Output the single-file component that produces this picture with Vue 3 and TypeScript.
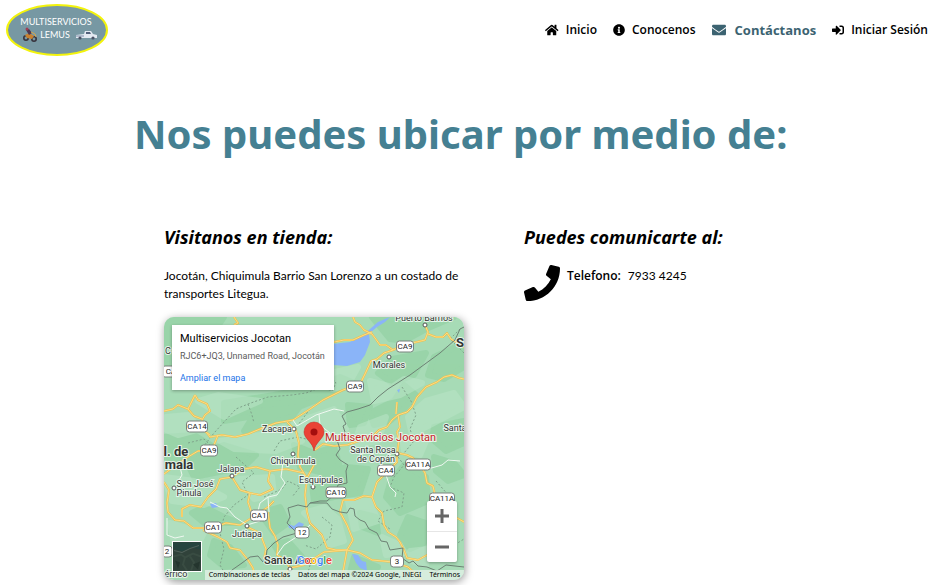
<script setup lang="ts">
import { ref } from 'vue'

interface NavItem {
  label: string
  href: string
  box: string
  icon: string
  active?: boolean
}

interface MapLabel {
  text: string
  x: number
  y: number
  size?: 'city'
}

interface Shield {
  text: string
  x: number
  y: number
  w: number
}

const nav: NavItem[] = [
  {
    label: 'Inicio',
    href: '#inicio',
    box: '0 0 576 512',
    icon: 'M280.37 148.26L96 300.11V464a16 16 0 0 0 16 16l112.06-.29a16 16 0 0 0 15.92-16V368a16 16 0 0 1 16-16h64a16 16 0 0 1 16 16v95.64a16 16 0 0 0 16 16.05L464 480a16 16 0 0 0 16-16V300L295.67 148.26a12.19 12.19 0 0 0-15.3 0zM571.6 251.47L488 182.56V44.05a12 12 0 0 0-12-12h-56a12 12 0 0 0-12 12v72.61L318.47 43a48 48 0 0 0-61 0L4.34 251.47a12 12 0 0 0-1.6 16.9l25.5 31A12 12 0 0 0 45.15 301l235.22-193.74a12.19 12.19 0 0 1 15.3 0L530.9 301a12 12 0 0 0 16.9-1.6l25.5-31a12 12 0 0 0-1.7-16.93z',
  },
  {
    label: 'Conocenos',
    href: '#conocenos',
    box: '0 0 512 512',
    icon: 'M256 8C119.043 8 8 119.083 8 256c0 136.997 111.043 248 248 248s248-111.003 248-248C504 119.083 392.957 8 256 8zm0 110c23.196 0 42 18.804 42 42s-18.804 42-42 42-42-18.804-42-42 18.804-42 42-42zm56 254c0 6.627-5.373 12-12 12h-88c-6.627 0-12-5.373-12-12v-24c0-6.627 5.373-12 12-12h12v-64h-12c-6.627 0-12-5.373-12-12v-24c0-6.627 5.373-12 12-12h64c6.627 0 12 5.373 12 12v100h12c6.627 0 12 5.373 12 12v24z',
  },
  {
    label: 'Contáctanos',
    href: '#contactanos',
    box: '0 0 512 512',
    active: true,
    icon: 'M502.3 190.8c3.9-3.1 9.7-.2 9.7 4.7V400c0 26.5-21.5 48-48 48H48c-26.5 0-48-21.5-48-48V195.6c0-5 5.7-7.8 9.7-4.7 22.4 17.4 52.1 39.5 154.1 113.6 21.1 15.4 56.7 47.8 92.2 47.6 35.7.3 72-32.8 92.3-47.6 102-74.1 131.6-96.3 154-113.7zM256 320c23.2.4 56.6-29.2 73.4-41.4 132.7-96.3 142.8-104.7 173.4-128.7 5.8-4.5 9.2-11.5 9.2-18.9v-19c0-26.5-21.5-48-48-48H48c-26.5 0-48 21.5-48 48v19c0 7.4 3.4 14.3 9.2 18.9 30.6 23.9 40.7 32.4 173.4 128.7 16.8 12.2 50.2 41.8 73.4 41.4z',
  },
  {
    label: 'Iniciar Sesión',
    href: '#sesion',
    box: '0 0 512 512',
    icon: 'M416 448h-84c-6.6 0-12-5.4-12-12v-40c0-6.6 5.4-12 12-12h84c17.7 0 32-14.3 32-32V160c0-17.7-14.3-32-32-32h-84c-6.6 0-12-5.4-12-12V76c0-6.6 5.4-12 12-12h84c53 0 96 43 96 96v192c0 53-43 96-96 96zm-47-201L201 79c-15-15-41-4.5-41 17v96H24c-13.3 0-24 10.7-24 24v96c0 13.3 10.7 24 24 24h136v96c0 21.5 26 32 41 17l168-168c9.3-9.4 9.3-24.6 0-34z',
  },
]

const darkPatches: string[] = [
  '0,0 60,0 40,30 0,50',
  '208,0 290,0 262,12 240,24 226,22',
  '228,42 262,36 250,58 228,66 214,56',
  '270,40 300,26 300,50 280,62 264,58',
  '60,86 110,78 150,70 176,60 190,66 150,84 120,96 84,100 60,104',
  '96,88 140,84 128,100 100,108 80,114',
  '206,96 230,84 240,68 252,78 240,92 226,104 210,108',
  '184,88 206,90 200,106 186,108',
  '0,120 30,118 50,130 30,146 0,140',
  '20,140 60,128 92,138 80,150 50,156 30,160',
  '130,128 150,136 170,130 176,150 160,156 136,150',
  '148,168 182,150 204,152 196,176 170,180 150,184',
  '240,148 262,160 264,184 236,196 222,180 226,166',
  '196,196 212,200 214,216 198,210',
  '270,110 300,104 300,126 282,134 268,122',
  '40,190 60,200 76,206 40,206 28,196',
  '50,224 66,230 80,248 60,250 46,238',
  '96,196 116,190 124,206 110,216',
  '244,200 262,206 260,226 246,232 236,218',
  '190,240 214,250 200,263 184,263',
  '110,228 124,224 138,240 120,244',
  '270,140 290,146 300,158 284,164 272,154',
]

const lightPatches: string[] = [
  '54,78 96,84 60,100 34,84',
  '130,106 170,92 182,112 158,122 140,118',
  '196,110 222,100 214,124 190,128',
  '244,100 262,84 290,76 300,90 262,110 248,118',
  '2,100 24,98 36,112 14,118 0,112',
  '56,124 96,118 120,110 138,124 112,134 70,132',
  '0,160 30,164 60,180 40,188 8,184',
  '74,162 108,160 110,178 90,182',
  '6,206 40,216 34,228 10,226',
  '184,184 206,184 214,204 190,212',
  '140,196 160,190 174,202 180,224 166,228 150,206',
  '238,120 262,124 256,138 240,134',
  '206,64 228,70 240,62 258,66 236,78 210,84',
  '218,220 236,228 240,236 222,238',
  '246,234 264,232 262,248 248,244',
  '166,56 194,50 184,68 168,72',
]

const roads: string[] = [
  'M189 0L191 5L196 8L200 13L208 17L211 21L216 28L222 28L229 33L220 36L213 42L207 44L201 57L196 67L188 70L179 73L159 83L146 92L129 103L112 106L96 112L84 117L71 120L58 118L46 120L38 110',
  'M31 78L34 83L43 87L46 94L41 98L38 103L38 112L46 118',
  'M31 78L27 86L24 92L14 88L9 92L0 94M24 92L30 99L38 102M70 0L74 6L70 8',
  'M170 25L180 23L189 23L200 18L208 15',
  'M229 33L240 28L261 23L264 15L261 8M264 17L272 20L279 20L283 16L287 22L300 30',
  'M300 62L295 61L288 58L280 60L273 65L262 70L253 80L248 90L243 95L234 98L236 110L233 115L235 123L233 137',
  'M234 98L228 103L223 110L215 113L206 122L195 124L183 128L170 129L159 127L151 133M233 85L232 97',
  'M123 105L132 114L135 126L134 138L136 150L143 161',
  'M233 137L233 145L223 155L213 165L208 180L200 179L190 183L179 183L176 195L183 208L189 223L183 233L172 233L163 231L158 218L146 206L143 195L141 178L143 161L150 148',
  'M208 180L212 190L218 196L220 208L224 215L232 220L236 225L240 233L243 241L254 243L263 238L275 240',
  'M234 136L243 138L249 141L256 148L261 156L263 166L269 169L271 178L280 190L293 201L300 205',
  'M183 233L196 236L208 243L229 245L244 250L258 263M183 233L179 255L176 263M183 233L160 235L140 248L126 251',
  'M0 165L5 173L3 186L4 195L11 203L20 204L29 211L49 211L62 206L76 208L89 200L84 185L86 176L76 173L68 160',
  'M0 157L12 148L24 140L34 134L52 134M54 118L50 128L45 134',
  'M68 160L80 152L92 150L106 154L104 164L109 172L96 178L86 176M106 154L122 152L140 156',
  'M18 200L18 192L26 188L37 190L44 180L52 172L56 162L68 160',
  'M104 195L106 211L111 219L114 228L113 238L120 242L126 251L116 263',
  'M39 213L54 220L63 225L66 231L76 233L84 243L89 251L91 263',
  'M89 200L104 190L110 184M83 210L96 216L102 232L100 242',
]

const whiteRoads: string[] = [
  'M46 185L56 190L63 191L71 200L83 208L96 204',
  'M3 201L3 218L11 221L20 219',
  'M119 145L117 160L121 166L113 178L104 180L96 186L93 198M104 180L105 195',
  'M129 103L133 109L152 98L170 92L180 94M155 97L156 108L166 116L162 126',
  'M222 158L226 170L232 176L231 180M264 152L278 148L284 143L296 144',
  'M12 168L18 158L16 150M113 238L120 228L134 219L146 208',
]

const dashed: string[] = [
  'M36 134L50 116L72 92L84 87L104 80L128 78L142 76L158 70L168 74L172 66L164 56',
  'M84 87L88 98L90 106M24 126L40 122L48 130M110 134L116 124L134 120L142 122',
  'M296 12L286 22L300 36M146 92L134 108',
  'M238 70L247 84L252 98L246 112L250 124L240 136',
  'M72 140L90 156L78 165L84 178L70 188L60 200L56 216L60 232L56 248L64 262',
  'M100 180L118 172L124 164L136 170L128 180',
  'M234 140L240 148L230 160L226 170L240 176L238 190L220 194L214 204L226 212',
  'M272 164L286 180L268 198L276 210L266 222M284 232L300 222',
  'M158 200L168 208L166 220L152 232L140 228M146 248L142 263',
]

const shields: Shield[] = [
  { text: 'CA9', x: 241, y: 30, w: 17 },
  { text: 'CA9', x: 191, y: 70, w: 17 },
  { text: 'CA', x: 7, y: 55, w: 18 },
  { text: 'CA14', x: 33, y: 110, w: 21 },
  { text: 'CA9', x: 45, y: 134, w: 17 },
  { text: 'CA4', x: 222, y: 154, w: 17 },
  { text: 'CA11A', x: 254, y: 148, w: 25 },
  { text: 'CA10', x: 172, y: 176, w: 20 },
  { text: 'CA11A', x: 278, y: 182, w: 25 },
  { text: 'CA1', x: 95, y: 199, w: 17 },
  { text: 'CA1', x: 49, y: 211, w: 17 },
  { text: '12', x: 138, y: 216, w: 14 },
  { text: '3', x: 233, y: 245, w: 13 },
  { text: '2', x: 3, y: 235, w: 10 },
]

const labels: MapLabel[] = [
  { text: 'Puerto Barrios', x: 260, y: 4 },
  { text: 'Morales', x: 225, y: 51 },
  { text: 'Zacapa', x: 113, y: 115 },
  { text: 'Chiquimula', x: 129, y: 147 },
  { text: 'Jalapa', x: 67, y: 155 },
  { text: 'San José', x: 31, y: 170 },
  { text: 'Pinula', x: 25, y: 179 },
  { text: 'Esquipulas', x: 157, y: 166 },
  { text: 'Jutiapa', x: 83, y: 220 },
  { text: 'Santa Rosa', x: 209, y: 136 },
  { text: 'de Copán', x: 212, y: 145 },
  { text: 'Santa', x: 291, y: 114 },
  { text: 'érrico', x: 12, y: 260 },
  { text: 'C', x: 4, y: 37 },
  { text: 'l. de', x: 12, y: 139, size: 'city' },
  { text: 'mala', x: 15, y: 152, size: 'city' },
  { text: 'S', x: 296, y: 30, size: 'city' },
]

const towns: number[][] = [
  [261, 8], [225, 40], [130, 112], [129, 137], [68, 159], [10, 171], [149, 170], [83, 209], [126, 252], [233, 137],
]

const zoomLevel = ref(8)
</script>

<template>
  <header class="topbar">
    <a class="brand" href="#inicio" aria-label="Multiservicios Lemus">
      <svg class="logo" viewBox="0 0 102 52">
        <ellipse cx="51" cy="26" rx="50" ry="25" fill="#7798a3" stroke="#f3f30c" stroke-width="2" />
        <text x="50" y="21" text-anchor="middle">MULTISERVICIOS</text>
        <text x="49" y="34" text-anchor="middle">LEMUS</text>
        <g fill="none" stroke="#38333d" stroke-width="1.6">
          <circle cx="20" cy="34" r="2.2" />
          <circle cx="28" cy="35" r="2.2" />
        </g>
        <path d="M19 31L23 29L28 32L26 35L21 34Z" fill="#c8812f" />
        <path d="M20 26L23 25L26 29L23 31Z" fill="#4d3750" />
        <path d="M25 28L29 30L30 33" stroke="#d9a94a" fill="none" />
        <circle cx="21" cy="25" r="1.5" fill="#9f4056" />
        <path d="M70 31L78 30L79 27L85 27L87 30L91 31V34H70Z" fill="#e3e9f1" />
        <path d="M80 28H84L85 30H80Z" fill="#53617b" />
        <path d="M70 32H78" stroke="#7d8ca8" stroke-width="1" />
        <circle cx="74" cy="34" r="1.6" fill="#4a5265" />
        <circle cx="87" cy="34" r="1.6" fill="#4a5265" />
      </svg>
    </a>
    <nav class="nav">
      <a v-for="item in nav" :key="item.label" :href="item.href" class="nav-link" :class="{ active: item.active }">
        <svg class="nav-icon" :viewBox="item.box" aria-hidden="true"><path :d="item.icon" /></svg>
        <span>{{ item.label }}</span>
      </a>
    </nav>
  </header>

  <main class="page">
    <h1>Nos puedes ubicar por medio de:</h1>
    <div class="columns">
      <section class="column">
        <h2>Visitanos en tienda:</h2>
        <p class="address">Jocotán, Chiquimula Barrio San Lorenzo a un costado de transportes Litegua.</p>
        <div class="map">
          <svg class="map-canvas" viewBox="0 0 300 263" preserveAspectRatio="xMidYMid slice">
            <rect width="300" height="263" fill="#a7dbb6" />
            <g class="dark"><polygon v-for="p in darkPatches" :key="p" :points="p" /></g>
            <g class="light"><polygon v-for="p in lightPatches" :key="p" :points="p" /></g>
            <g fill="#8ab4f8">
              <path d="M169 27L186 25L199 18L206 12L214 5L221 2L226 0L221 5L213 10L205 17L206 25L201 38L196 45L183 49L169 48Z" />
              <path d="M188 237L194 238L198 244L202 245L203 254L196 251L192 246Z" />
              <path d="M124 207L130 209L135 205L140 207L137 212L132 213L125 211Z" />
              <path d="M46 187L52 186L54 190L48 191Z" />
              <path d="M233 73L236 72L235 76Z" />
            </g>
            <g class="borders-dashed"><path v-for="d in dashed" :key="d" :d="d" /></g>
            <g class="road-case"><path v-for="d in roads" :key="d" :d="d" /></g>
            <g class="road"><path v-for="d in roads" :key="d" :d="d" /></g>
            <g class="road-white"><path v-for="d in whiteRoads" :key="d" :d="d" /></g>
            <g class="border">
              <path d="M300 10L296 12L291 23L276 36L261 47L246 58L224 72L214 80L206 88L194 92L183 95L178 99L182 107L179 109L181 115L173 123L176 132L172 138L176 143L184 148L182 154L183 166L174 168L170 178L163 184L156 184L146 186L143 190L134 188L124 191L126 200L123 206L128 211L133 216L119 220L110 226L103 233L102 241L99 245L94 239L86 240L78 246L68 253L59 263" />
              <path d="M146 186L163 186L168 192L176 195L183 196L186 191L190 192L191 199L196 203L201 205L205 212L213 216L217 224L223 225L226 233L239 231L238 241L245 246L249 244L254 249L263 250L273 254L282 248L300 250" />
            </g>
            <g class="town"><circle v-for="t in towns" :key="t.join()" :cx="t[0]" :cy="t[1]" r="2" /></g>
            <g v-for="s in shields" :key="s.text + s.x" class="shield">
              <rect :x="s.x - s.w / 2" :y="s.y - 6" :width="s.w" height="11" rx="3" />
              <text :x="s.x" :y="s.y + 2">{{ s.text }}</text>
            </g>
            <text v-for="l in labels" :key="l.text" class="label" :class="l.size" :x="l.x" :y="l.y">{{ l.text }}</text>
            <text class="label town-name" x="100" y="247">Santa Ana</text>
            <path d="M150 134C149 125 140 122 140 115A10 10 0 0 1 160 115C160 122 151 125 150 134Z" fill="#ea4335" stroke="#c5221f" stroke-width=".5" />
            <circle cx="150" cy="115" r="3.5" fill="#a50e0e" />
            <text class="place" x="161" y="124">Multiservicios Jocotan</text>
            <text class="google" x="133" y="247"><tspan fill="#4285f4">G</tspan><tspan fill="#ea4335">o</tspan><tspan fill="#fbbc04">o</tspan><tspan fill="#4285f4">g</tspan><tspan fill="#34a853">l</tspan><tspan fill="#ea4335">e</tspan></text>
          </svg>

          <div class="card">
            <strong>Multiservicios Jocotan</strong>
            <span>RJC6+JQ3, Unnamed Road, Jocotán</span>
            <a href="#mapa">Ampliar el mapa</a>
          </div>

          <button class="satellite" type="button" aria-label="Satélite">
            <svg viewBox="0 0 28 28">
              <rect width="28" height="28" fill="#30423a" />
              <path d="M0 0H28V7L18 5L9 9L0 6Z" fill="#26443f" />
              <path d="M1 8L9 10L17 6L26 3" fill="none" stroke="#52635c" />
              <path d="M0 14L8 12L12 15L10 22L14 28M12 15L20 11L28 14M17 14L21 20L18 28" fill="none" stroke="#394c42" stroke-width="2" />
              <path d="M2 18L7 20L5 26ZM20 22L27 19L25 27Z" fill="#24352e" />
            </svg>
          </button>

          <div class="zoom">
            <button type="button" aria-label="Acercar" @click="zoomLevel++">
              <svg viewBox="0 0 14 14"><path d="M7 0V14M0 7H14" /></svg>
            </button>
            <button type="button" aria-label="Alejar" @click="zoomLevel--">
              <svg viewBox="0 0 14 14"><path d="M0 7H14" /></svg>
            </button>
          </div>

          <div class="credits">
            <button type="button">Combinaciones de teclas</button>
            <span>Datos del mapa ©2024 Google, INEGI</span>
            <a href="#terminos">Términos</a>
          </div>
        </div>
      </section>

      <section class="column">
        <h2>Puedes comunicarte al:</h2>
        <div class="phone">
          <svg class="phone-icon" viewBox="0 0 512 512" aria-hidden="true">
            <path d="M493.4 24.6l-104-24c-11.3-2.6-22.9 3.3-27.5 13.9l-48 112c-4.2 9.8-1.4 21.3 6.9 28l60.6 49.6c-36 76.7-98.9 140.5-177.2 177.2l-49.6-60.6c-6.8-8.3-18.2-11.1-28-6.9l-112 48C3.9 366.5-2 378.1.6 389.4l24 104C27.1 504.2 36.7 512 48 512c256.1 0 464-207.5 464-464 0-11.2-7.7-20.9-18.6-23.4z" />
          </svg>
          <p><b>Telefono:</b><span>7933 4245</span></p>
        </div>
      </section>
    </div>
  </main>
</template>

<style>
body {
  margin: 0;
  background: #fff;
}
</style>

<style scoped>
.topbar,
.page {
  font-family: "Open Sans", "Noto Sans", sans-serif;
  color: #000;
}

.topbar {
  display: flex;
  justify-content: space-between;
  align-items: center;
  padding: 4px 12px 4px 6px;
}

.brand,
.logo {
  display: block;
}

.logo {
  width: 102px;
  height: 52px;
}

.logo text {
  font: 9px Lato, sans-serif;
  fill: #fff;
}

.nav {
  display: flex;
  align-items: center;
  gap: 16px;
}

.nav-link {
  display: flex;
  align-items: center;
  gap: 7px;
  color: #000;
  font-size: 12px;
  font-weight: 600;
  line-height: 18px;
  text-decoration: none;
  white-space: nowrap;
}

.nav-icon {
  height: 12px;
  fill: currentColor;
}

.nav-link.active {
  gap: 9px;
  color: #3c6371;
  font-size: 13px;
  font-weight: 700;
}

.active .nav-icon {
  height: 14px;
}

.page {
  padding: 44px 86px 5px 134px;
}

h1 {
  margin: 0;
  color: #458092;
  font-family: "Noto Sans", "Open Sans", sans-serif;
  font-size: 40px;
  line-height: 60px;
  font-weight: 700;
  white-space: nowrap;
}

.columns {
  display: grid;
  grid-template-columns: 1fr 1fr;
  padding-top: 60px;
}

.column {
  padding: 0 30px;
}

h2 {
  margin: 0;
  font-family: "Noto Sans", "Open Sans", sans-serif;
  font-size: 18px;
  line-height: 26px;
  font-style: italic;
  font-weight: 700;
  white-space: nowrap;
}

.address {
  margin: 17px 0 14px;
  font-family: Lato, "Open Sans", sans-serif;
  font-size: 12px;
  line-height: 18px;
}

.map {
  position: relative;
  overflow: hidden;
  border-radius: 10px;
  box-shadow: 1px 2px 8px rgba(0, 0, 0, 0.4);
  font-family: Roboto, sans-serif;
}

.map-canvas {
  display: block;
  width: 100%;
}

.dark,
.light {
  stroke-width: 6;
  stroke-linejoin: round;
}

.dark {
  fill: #94d2a5;
  stroke: #94d2a5;
  opacity: 0.75;
}

.light {
  fill: #b8e3c5;
  stroke: #b8e3c5;
  opacity: 0.6;
}

.road-case,
.road,
.road-white,
.border,
.borders-dashed {
  fill: none;
  stroke-linejoin: round;
}

.road-case {
  stroke: #efc04c;
  stroke-width: 2;
}

.road {
  stroke: #fbdc86;
  stroke-width: 1;
}

.road-white {
  stroke: #eff8f1;
  stroke-width: 1;
}

.border {
  stroke: #6d8174;
  stroke-width: 1;
}

.borders-dashed {
  stroke: #7fa28a;
  stroke-width: 1;
  stroke-dasharray: 2 2;
}

.town {
  fill: #fff;
  stroke: #555;
  stroke-width: 1;
}

.shield rect {
  fill: #fff;
  stroke: #78827c;
  stroke-width: 1;
}

.shield text {
  font-size: 8px;
  fill: #222;
  text-anchor: middle;
}

.label {
  font-size: 9px;
  fill: #333;
  stroke: #e6f5ea;
  stroke-width: 2;
  paint-order: stroke;
  text-anchor: middle;
}

.label.city {
  font-size: 13px;
  font-weight: 700;
}

.label.town-name {
  font-size: 11px;
  font-weight: 500;
  text-anchor: start;
}

.place {
  font-size: 11px;
  fill: #c5221f;
  stroke: #e6f5ea;
  stroke-width: 2;
  paint-order: stroke;
}

.google {
  font-size: 11px;
  font-weight: 500;
  stroke: #fff;
  stroke-width: 1;
  paint-order: stroke;
}

.card {
  position: absolute;
  top: 8px;
  left: 8px;
  display: flex;
  flex-direction: column;
  box-sizing: border-box;
  width: 162px;
  height: 65px;
  padding: 6px 8px;
  background: #fff;
  box-shadow: 0 1px 3px rgba(0, 0, 0, 0.3);
  font-size: 9px;
  line-height: 14px;
  white-space: nowrap;
}

.card strong {
  margin-bottom: 3px;
  font-size: 11px;
  line-height: 15px;
  font-weight: 400;
}

.card span {
  color: #5b5b5b;
}

.card a {
  margin-top: 8px;
  color: #1a73e8;
  text-decoration: none;
}

.satellite {
  position: absolute;
  left: 8px;
  bottom: 8px;
  width: 30px;
  height: 31px;
  padding: 0;
  border: 1px solid #fff;
  background: #30423a;
}

.satellite svg {
  display: block;
  width: 100%;
  height: 100%;
}

.zoom {
  position: absolute;
  right: 7px;
  bottom: 18px;
  width: 30px;
  border-radius: 2px;
  background: #fff;
  box-shadow: 0 1px 3px rgba(0, 0, 0, 0.3);
}

.zoom button {
  display: flex;
  align-items: center;
  justify-content: center;
  width: 30px;
  height: 30px;
  padding: 0;
  border: 0;
  background: none;
}

.zoom button + button {
  height: 31px;
  border-top: 1px solid #e6e6e6;
}

.zoom svg {
  width: 14px;
  height: 14px;
  fill: none;
  stroke: #666;
  stroke-width: 3;
}

.credits {
  position: absolute;
  right: 0;
  bottom: 0;
  display: flex;
  gap: 8px;
  padding: 0 4px;
  background: rgba(229, 243, 233, 0.75);
  font-family: "Noto Sans", Roboto, sans-serif;
  font-size: 7px;
  line-height: 10px;
  white-space: nowrap;
}

.credits button,
.credits a {
  padding: 0;
  border: 0;
  background: none;
  color: #000;
  font: inherit;
  text-decoration: none;
}

.phone {
  display: flex;
  gap: 7px;
  padding-top: 15px;
}

.phone-icon {
  width: 36px;
  height: 36px;
}

.phone p {
  display: flex;
  gap: 7px;
  margin: 0;
  font-size: 12px;
  line-height: 22px;
}

.phone b {
  font-weight: 600;
}

.phone span {
  font-family: Lato, "Open Sans", sans-serif;
}
</style>
